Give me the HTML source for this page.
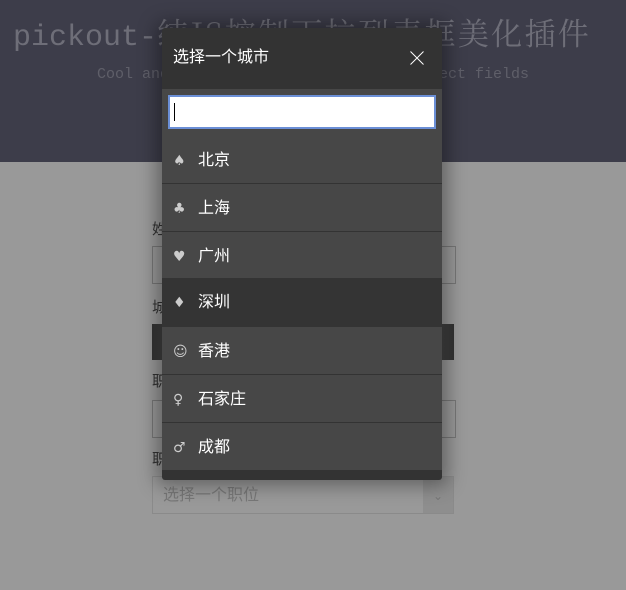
<!DOCTYPE html>
<html><head><meta charset="utf-8"><style>
*{margin:0;padding:0;box-sizing:border-box}
body{width:626px;height:590px;overflow:hidden;background:#999;font-family:"Liberation Sans","Noto Sans CJK SC",sans-serif;position:relative}
.hdr{position:absolute;left:0;top:0;width:626px;height:162px;background:#3d3d4a}
.t1{position:absolute;left:13px;top:9px;font-family:"Liberation Mono",monospace;font-size:30px;color:#6e6e78;white-space:nowrap}
.t1 span{font-family:"Noto Serif CJK SC",serif;font-size:31px;letter-spacing:2.3px}
.t2{position:absolute;left:0;width:626px;top:66px;text-align:center;font-family:"Liberation Mono",monospace;font-size:15px;color:#5f5f69;white-space:nowrap}
.lbl{position:absolute;left:152px;font-size:15px;color:#333}
.inp{position:absolute;left:152px;width:304px;height:38px;border:1px solid #777}
.sel{position:absolute;left:152px;width:302px;height:36px;background:linear-gradient(90deg,#333,#555 8%,#555 92%,#333)}
.sel2{position:absolute;left:152px;top:476px;width:302px;height:38px;border:1px solid #8a8a8a;color:#777;font-size:16px;line-height:38px;padding-left:10px}
.sel2 b{position:absolute;right:0;top:0;width:30px;height:36px;background:#8e8e8e;color:#777;font-weight:normal;text-align:center;font-size:12px}
.modal{position:absolute;left:162px;top:28px;width:280px;height:452px;background:#333;border-radius:3px;box-shadow:0 0 18px 6px rgba(0,0,0,.35);overflow:hidden}
.mh{height:61px;color:#fff;font-size:16px;line-height:60px;padding-left:11px;position:relative}
.x{position:absolute;right:18px;top:23px;width:14px;height:14px}
.body{background:#474747;position:absolute;top:61px;left:0;width:280px;height:381px}
.search{position:absolute;left:6px;top:6px;width:268px;height:34px;background:#fff;border:2px solid #6b8fd6}
.search i{position:absolute;left:4px;top:6px;width:1px;height:18px;background:#000}
.it{position:absolute;left:0;width:280px;height:48px;border-bottom:1px solid #333;color:#fff;font-size:16px;line-height:50px;padding-left:36px}
.it span{position:absolute;left:11px;top:0;color:#ccc;font-size:14px;font-family:"DejaVu Sans",sans-serif}
.it.sel{background:#343434}
</style></head><body>
<div class="hdr"><div class="t1">pickout-<span>纯JS控制下拉列表框美化插件</span></div><div class="t2">Cool and simple way to design your select fields</div></div>
<div class="lbl" style="top:218px">姓名</div>
<div class="inp" style="top:246px"></div>
<div class="lbl" style="top:296px">城市</div>
<div class="sel" style="top:324px"></div>
<div class="lbl" style="top:370px">职业</div>
<div class="inp" style="top:400px"></div>
<div class="lbl" style="top:448px">职位</div>
<div class="sel2">选择一个职位<b>&#8964;</b></div>
<div class="modal">
<div class="mh">选择一个城市<svg class="x" viewBox="0 0 14 14"><path d="M0.5 0.5L13.5 13.5M13.5 0.5L0.5 13.5" stroke="#fff" stroke-width="1"/></svg></div>
<div class="body">
<div class="search"><i></i></div>
<div class="it" style="top:47px;height:48px"><span>♠</span>北京</div>
<div class="it" style="top:95px"><span>♣</span>上海</div>
<div class="it" style="top:143px"><span>♥</span>广州</div>
<div class="it sel" style="top:189px;height:49px;border:0"><span>♦</span>深圳</div>
<div class="it" style="top:238px"><span>☺</span>香港</div>
<div class="it" style="top:286px"><span>♀</span>石家庄</div>
<div class="it" style="top:334px;border:0"><span>♂</span>成都</div>
</div>
</div>
</body></html>
